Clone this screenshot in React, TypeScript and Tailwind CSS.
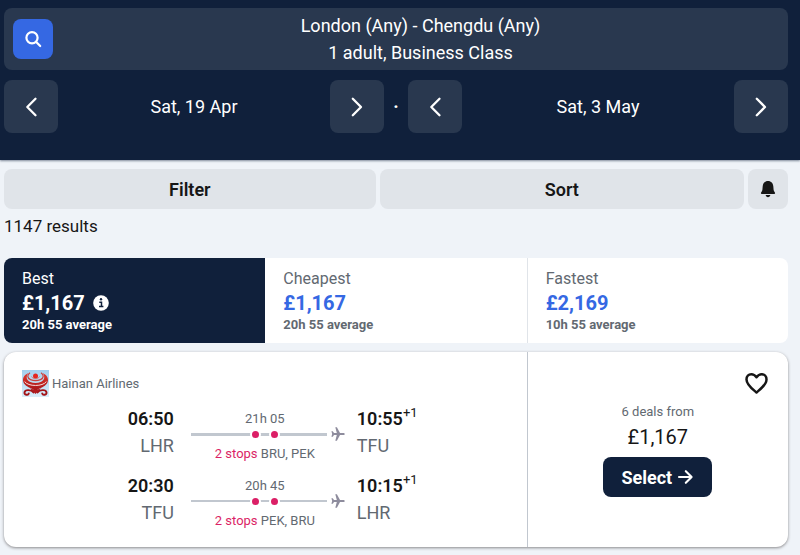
import React, { useState } from "react";

type leg = {
  depart: string;
  from: string;
  arrive: string;
  to: string;
  duration: string;
  stops: string;
  line: string;
};

const legs: leg[] = [
  {
    depart: "06:50",
    from: "LHR",
    arrive: "10:55",
    to: "TFU",
    duration: "21h 05",
    stops: "BRU, PEK",
    line: "h-[3px]",
  },
  {
    depart: "20:30",
    from: "TFU",
    arrive: "10:15",
    to: "LHR",
    duration: "20h 45",
    stops: "PEK, BRU",
    line: "h-[2px]",
  },
];

const tabs = [
  { name: "Best", price: "£1,167", average: "20h 55 average" },
  { name: "Cheapest", price: "£1,167", average: "20h 55 average" },
  { name: "Fastest", price: "£2,169", average: "10h 55 average" },
];

function Chevron({ left }: { left?: boolean }) {
  return (
    <svg
      width="24"
      height="24"
      viewBox="0 0 24 24"
      fill="none"
      stroke="currentColor"
      strokeWidth="2.3"
      strokeLinecap="round"
      strokeLinejoin="round"
    >
      <path d={left ? "M16.5 3.8 8.3 12l8.2 8.2" : "M7.8 3.8 16 12l-8.2 8.2"} />
    </svg>
  );
}

function DayPicker({ date }: { date: string }) {
  const button =
    "w-[54px] h-[53px] shrink-0 rounded-lg bg-[#29384f] flex items-center justify-center";
  return (
    <div className="flex flex-1 items-center justify-between">
      <button className={button} aria-label="Previous day">
        <Chevron left />
      </button>
      <p className="text-[18px] leading-[27px]">{date}</p>
      <button className={button} aria-label="Next day">
        <Chevron />
      </button>
    </div>
  );
}

function AirlineLogo() {
  return (
    <svg width="27" height="27" viewBox="0 0 27 27" fill="none">
      <defs>
        <linearGradient id="sky" x1="0" y1="0" x2="0" y2="1">
          <stop offset="0" stopColor="#a3d0ee" />
          <stop offset="1" stopColor="#d9edf9" />
        </linearGradient>
        <linearGradient id="wing" x1="0" y1="0" x2="0" y2="1">
          <stop offset="0" stopColor="#e23a2e" />
          <stop offset="1" stopColor="#a31418" />
        </linearGradient>
      </defs>
      <rect width="27" height="27" fill="url(#sky)" />
      <path
        d="M6.500 3C2.500 4.500 .8 7.500 1 10.500c.4 4.300 5 6.800 9 8.200l3.500 2.300 3.500-2.300c4-1.400 8.600-3.900 9-8.200.2-3-1.500-6-5.500-7.500 2.800 3.600 2.300 7.200-1.800 9-3.200 1.300-7.200 1.300-10.400 0C4.200 10.200 3.700 6.600 6.500 3z"
        fill="url(#wing)"
      />
      <path
        d="M2.600 11.500c3.400 5.300 18.400 5.300 21.800 0"
        stroke="#f5dcdc"
        strokeWidth="1"
      />
      <path
        d="M8 2.800C5 4.800 5 8 8.500 9.600c3 1.300 7 1.300 10 0C22 8 22 4.800 19 2.800"
        stroke="#c9433f"
        strokeWidth="1.200"
      />
      <path d="M9.500 6.500c1.500 3 6.500 3 8 0" stroke="#d8645d" strokeWidth=".8" />
      <circle cx="13.500" cy="6" r="2.500" fill="#e5261f" />
      <path
        d="M8 18.200c1.500 2.300 3.700 3.500 5.500 5.800 1.800-2.300 4-3.500 5.500-5.800l-5.500 2z"
        fill="#b3191c"
      />
      <path
        d="M11.500 22.500C9.500 19.700 3.200 19 2.500 22.300c-.3 2.700 3.700 3.400 4.300 1.200M15.500 22.500c2-2.800 8.300-3.500 9-.2.300 2.700-3.700 3.400-4.300 1.200"
        stroke="#a31418"
        strokeWidth="1.900"
        strokeLinecap="round"
      />
    </svg>
  );
}

function Plane() {
  return (
    <svg width="14" height="14" viewBox="0 0 14 14" fill="#8e8c9d">
      <path d="M13.800 7c0 .7-.7 1.100-1.600 1.100H9L5.900 13.700H4.300L5.800 8.100H3L1.800 9.800H.4L1.200 7 .4 4.200h1.400L3 5.900h2.800L4.300.3h1.600L9 5.900h3.200c.9 0 1.600.4 1.600 1.100z" />
    </svg>
  );
}

function Leg({ data }: { data: leg }) {
  const dot = "size-[7px] box-content rounded-full bg-[#db1f66] border-2 border-white";
  return (
    <div className="flex items-start">
      <div className="flex-1 text-right text-[18px] leading-[27px]">
        <p className="font-semibold text-[#161616]">{data.depart}</p>
        <p className="text-[#626971]">{data.from}</p>
      </div>
      <div className="w-[154px] ml-[17px] mr-3 pt-1 text-[13px] leading-5">
        <p className="w-[148px] text-center text-[#626971]">{data.duration}</p>
        <div className="flex items-center h-[14px] -mt-[2px] gap-1">
          <div className="relative flex-1 flex items-center">
            <span className={`w-full bg-[#c1c7cf] ${data.line}`}></span>
            <span className="absolute left-3 right-0 flex justify-center gap-2">
              <span className={dot}></span>
              <span className={dot}></span>
            </span>
          </div>
          <Plane />
        </div>
        <p className="w-[148px] text-center text-[#626971] mt-[3px] whitespace-nowrap">
          <span className="text-[#db1f66]">2 stops</span> {data.stops}
        </p>
      </div>
      <div className="flex-1 text-[18px] leading-[27px]">
        <p className="flex font-semibold text-[#161616]">
          {data.arrive}
          <span className="text-[13px] leading-4 font-normal">+1</span>
        </p>
        <p className="text-[#626971]">{data.to}</p>
      </div>
    </div>
  );
}

function App() {
  const [active, setActive] = useState(0);
  const [isSaved, setIsSaved] = useState(false);

  return (
    <div className="min-h-screen bg-[#eff3f8] font-[Roboto,sans-serif] text-[#161616]">
      <header className="bg-[#10203b] text-white pt-2 pb-[27px] pl-1 pr-3 flex flex-col gap-[10px] shadow-[0_1px_2px_#10203b80]">
        <div className="flex items-center rounded-lg bg-[#29384f] pl-[9px] py-1">
          <button
            className="size-10 rounded-lg bg-[#3568e3] flex items-center justify-center"
            aria-label="Edit search"
          >
            <svg
              width="18"
              height="18"
              viewBox="0 0 18 18"
              fill="none"
              stroke="currentColor"
              strokeWidth="2.200"
              strokeLinecap="round"
            >
              <circle cx="8" cy="7.800" r="5.600" />
              <path d="m12.200 12 4 4" />
            </svg>
          </button>
          <div className="flex-1 text-center text-[18px] leading-[27px]">
            <p>London (Any) - Chengdu (Any)</p>
            <p>1 adult, Business Class</p>
          </div>
        </div>
        <div className="flex items-center">
          <DayPicker date="Sat, 19 Apr" />
          <span className="w-6 text-center text-[18px] font-bold">·</span>
          <DayPicker date="Sat, 3 May" />
        </div>
      </header>

      <main className="pl-1 pr-3 pt-[9px] pb-2">
        <div className="flex gap-1 text-[18px] font-semibold">
          <button className="flex-auto h-10 rounded-lg bg-[#e0e4e9]">Filter</button>
          <button className="flex-auto h-10 rounded-lg bg-[#e0e4e9]">Sort</button>
          <button
            className="size-10 shrink-0 rounded-lg bg-[#e0e4e9] flex items-center justify-center"
            aria-label="Price alerts"
          >
            <svg width="16" height="18" viewBox="0 0 16 18" fill="currentColor">
              <path d="M8 1C4.800 1 2.900 3.400 2.700 6.300l-.3 3.500c-.1.900-.5 1.500-1 2.100-.4.500-.5.900-.5 1.300 0 .5.400.8.900.8h12.400c.5 0 .9-.3.900-.8 0-.4-.1-.8-.5-1.300-.5-.6-.9-1.200-1-2.100l-.3-3.500C13.100 3.400 11.200 1 8 1zM5.700 15h4.600c-.1 1.300-1.100 2.200-2.300 2.200S5.800 16.300 5.700 15z" />
            </svg>
          </button>
        </div>
        <p className="mt-1 text-[17px] leading-[27px]">1147 results</p>

        <div className="mt-[18px] grid grid-cols-3 rounded-lg overflow-hidden bg-white">
          {tabs.map((tab, i) => (
            <button
              key={tab.name}
              onClick={() => setActive(i)}
              className={`pl-[18px] pt-[9px] pb-2 text-left ${
                active === i ? "bg-[#10203b] text-white" : "text-[#626971]"
              } ${i === 2 ? "border-l border-[#e0e4e9]" : ""}`}
            >
              <p className="text-[16px] leading-6">{tab.name}</p>
              <p
                className={`flex items-center gap-2 text-[20px] leading-6 font-bold ${
                  active === i ? "" : "text-[#3568e3]"
                }`}
              >
                {tab.price}
                {i === 0 && (
                  <svg width="16" height="16" viewBox="0 0 16 16">
                    <circle cx="8" cy="8" r="7.800" fill={active === 0 ? "#fff" : "#626971"} />
                    <path
                      d="M6.300 7.200h2.200v4.300M6 11.500h4.400"
                      stroke={active === 0 ? "#10203b" : "#fff"}
                      strokeWidth="1.500"
                      fill="none"
                    />
                    <circle cx="8" cy="4.300" r="1.200" fill={active === 0 ? "#10203b" : "#fff"} />
                  </svg>
                )}
              </p>
              <p className="text-[13px] leading-5 font-bold">{tab.average}</p>
            </button>
          ))}
        </div>

        <div className="mt-[9px] grid grid-cols-3 rounded-xl bg-white shadow-[0_1px_3px_#25201f80]">
          <div className="col-span-2 px-[18px] pt-[18px] pb-4">
            <div className="flex items-center gap-[3px] text-[13px] text-[#626971]">
              <AirlineLogo />
              <p>Hainan Airlines</p>
            </div>
            <div className="mt-2 flex flex-col gap-2">
              {legs.map((item) => (
                <Leg key={item.depart} data={item} />
              ))}
            </div>
          </div>
          <div className="border-l border-[#c1c7cf] flex flex-col items-center pt-[18px]">
            <button
              onClick={() => setIsSaved(!isSaved)}
              className="self-end mr-[18px]"
              aria-label="Save flight"
            >
              <svg
                width="26"
                height="26"
                viewBox="0 0 26 26"
                fill={isSaved ? "currentColor" : "none"}
                stroke="currentColor"
                strokeWidth="2.500"
                strokeLinejoin="round"
              >
                <path d="M12.500 22.500C9 19.500 2.500 14.800 2.500 9.400 2.500 6.200 4.600 4.200 7.300 4.200c2.200 0 3.900 1.200 5.200 3 1.300-1.800 3-3 5.200-3 2.700 0 4.800 2 4.800 5.200 0 5.400-6.500 10.100-10 13.100z" />
              </svg>
            </button>
            <p className="mt-[6px] text-[13px] leading-5 text-[#626971]">6 deals from</p>
            <p className="text-[20px] leading-[30px]">£1,167</p>
            <button className="mt-[5px] h-10 px-[18px] rounded-lg bg-[#10203b] text-white text-[18px] font-bold flex items-center gap-1">
              Select
              <svg
                width="18"
                height="18"
                viewBox="0 0 18 18"
                fill="none"
                stroke="currentColor"
                strokeWidth="2.100"
                strokeLinecap="round"
                strokeLinejoin="round"
              >
                <path d="M3 9h12.500M9.800 3.200 15.600 9l-5.800 5.800" />
              </svg>
            </button>
          </div>
        </div>
      </main>
    </div>
  );
}

export default App;
